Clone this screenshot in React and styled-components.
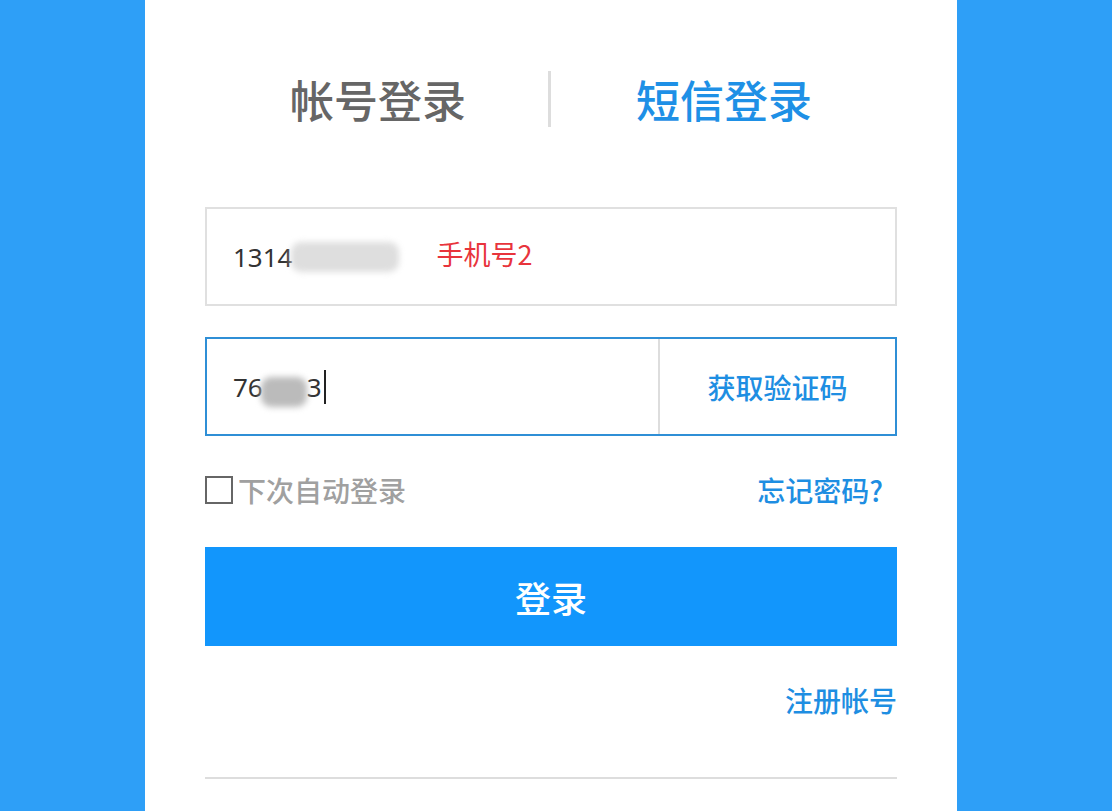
import React from "react";
import styled, { createGlobalStyle } from "styled-components";

const Global = createGlobalStyle`
  html, body { margin: 0; padding: 0; background: #2e9ff7; }
  body { font-family: "Noto Sans CJK SC", "Noto Sans", sans-serif; font-weight: 500; }
  * { box-sizing: border-box; }
`;

const Page = styled.div`
  width: 1112px;
  height: 811px;
  overflow: hidden;
  background: #2e9ff7;
`;

const Panel = styled.div`
  width: 812px;
  height: 811px;
  margin-left: 145px;
  background: #ffffff;
  padding: 71px 60px 0;
  display: flex;
  flex-direction: column;
`;

const Tabs = styled.div`
  display: flex;
  align-items: center;
  height: 56px;
`;

const Tab = styled.div`
  flex: 1;
  text-align: center;
  font-size: 44px;
  line-height: 56px;
  color: ${(p) => (p.$active ? "#1e90e6" : "#666666")};
`;

const TabDivider = styled.div`
  width: 3px;
  height: 56px;
  margin-left: -3px;
  background: #dddddd;
`;

const Field = styled.div`
  height: 99px;
  margin-top: ${(p) => p.$mt}px;
  border: 2px solid ${(p) => (p.$focus ? "#2f8fd6" : "#e0e0e0")};
  display: flex;
  align-items: stretch;
`;

const FieldMain = styled.div`
  flex: 1;
  display: flex;
  align-items: center;
  padding-left: 26px;
  font-family: "Noto Sans", "Noto Sans CJK SC", sans-serif;
  font-weight: 400;
  font-size: 26px;
  color: #333333;
`;

const Blur = styled.span`
  display: inline-block;
  width: ${(p) => p.$w}px;
  height: 30px;
  margin-left: ${(p) => p.$ml}px;
  margin-top: ${(p) => p.$mt || 0}px;
  background: ${(p) => p.$c};
  filter: blur(3px);
  border-radius: 10px;
`;

const Hint = styled.span`
  margin-left: 38px;
  margin-top: -6px;
  font-family: "Noto Sans CJK SC", sans-serif;
  font-weight: 400;
  font-size: 27px;
  color: #e8343c;
`;

const Caret = styled.span`
  display: inline-block;
  width: 2px;
  height: 34px;
  background: #222;
  margin-left: 2px;
`;

const CodeButton = styled.div`
  width: 237px;
  border-left: 2px solid #dddddd;
  display: flex;
  align-items: center;
  justify-content: center;
  font-size: 28px;
  color: #1e8ee2;
`;

const Options = styled.div`
  margin-top: 36px;
  height: 36px;
  display: flex;
  align-items: center;
  justify-content: space-between;
`;

const Remember = styled.label`
  display: flex;
  align-items: center;
  gap: 5px;
  font-size: 28px;
  color: #a0a0a0;
`;

const Box = styled.span`
  width: 28px;
  height: 28px;
  border: 2px solid #666666;
  background: #fff;
`;

const Link = styled.span`
  font-size: 28px;
  color: #1e8ee2;
  margin-right: ${(p) => p.$mr || 0}px;
`;

const Submit = styled.div`
  margin-top: 39px;
  height: 99px;
  background: #1296fc;
  color: #ffffff;
  font-size: 36px;
  display: flex;
  align-items: center;
  justify-content: center;
`;

const RegisterRow = styled.div`
  margin-top: 36px;
  height: 36px;
  display: flex;
  align-items: center;
  justify-content: flex-end;
`;

const Rule = styled.div`
  margin-top: 59px;
  height: 2px;
  background: #dddddd;
`;

export default function App() {
  return (
    <Page>
      <Global />
      <Panel>
        <Tabs>
          <Tab>帐号登录</Tab>
          <TabDivider />
          <Tab $active>短信登录</Tab>
        </Tabs>
        <Field $mt={80}>
          <FieldMain>
            1314
            <Blur $w={108} $ml={-2} $c="#dedede" />
            <Hint>手机号2</Hint>
          </FieldMain>
        </Field>
        <Field $mt={31} $focus>
          <FieldMain>
            76
            <Blur $w={46} $ml={-2} $mt={10} $c="#bbbbbb" />
            3
            <Caret />
          </FieldMain>
          <CodeButton>获取验证码</CodeButton>
        </Field>
        <Options>
          <Remember>
            <Box />
            下次自动登录
          </Remember>
          <Link $mr={14}>忘记密码?</Link>
        </Options>
        <Submit>登录</Submit>
        <RegisterRow>
          <Link>注册帐号</Link>
        </RegisterRow>
        <Rule />
      </Panel>
    </Page>
  );
}
